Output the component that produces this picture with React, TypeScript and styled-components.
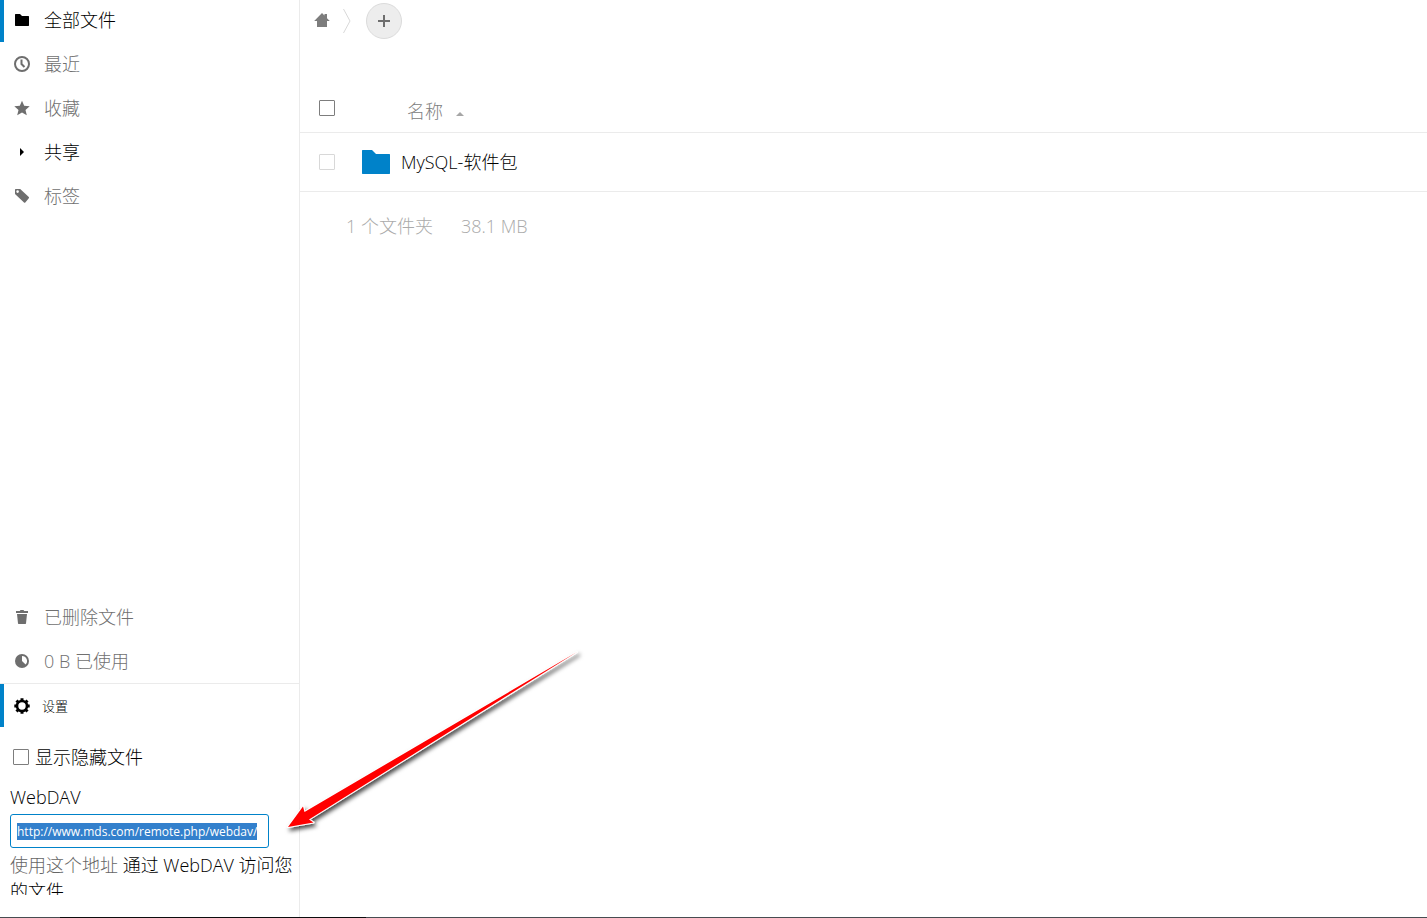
import React from "react";
import styled, { createGlobalStyle, css } from "styled-components";

const GlobalStyle = createGlobalStyle`
  *, *::before, *::after { box-sizing: border-box; }
  body {
    margin: 0;
    background: #fff;
    color: #000;
    font-family: "Open Sans", "Noto Sans CJK SC", sans-serif;
    font-size: 18px;
    font-weight: 300;
    line-height: 26px;
  }
  button, input { font: inherit; color: inherit; }
  a { color: inherit; text-decoration: none; }
`;

const Shell = styled.div`
  position: relative;
  display: grid;
  grid-template-columns: 300px 1fr;
  min-height: 100vh;
  overflow: hidden;
  padding-bottom: 1px;
  background: linear-gradient(90deg, #474c51 60px, #0c0c0e 60px 366px, #474c51 366px) bottom / 100% 1px no-repeat;
`;

const Sidebar = styled.aside`
  display: flex;
  flex-direction: column;
  justify-content: space-between;
  border-right: 1px solid #ebebeb;
  padding-bottom: 22px;
`;

const NavList = styled.ul`
  list-style: none;
  margin: 0;
  padding: 0;
`;

const MainNav = styled(NavList)`
  margin-top: -2px;
`;

const activeBar = css`
  box-shadow: inset 4px 0 #0082c9;
`;

const NavLink = styled.a<{ $active?: boolean; $strong?: boolean }>`
  display: flex;
  align-items: center;
  gap: 14px;
  height: 44px;
  padding-left: 14px;
  color: ${(p) => (p.$active || p.$strong ? "#000" : "#707070")};
  ${(p) => p.$active && activeBar}
  svg { color: ${(p) => (p.$active || p.$strong ? "#000" : "#6e6e6e")}; }
`;

const Icon = styled.svg`
  width: 16px;
  height: 16px;
  flex: none;
  display: block;
`;

const Settings = styled.section`
  border-top: 1px solid #ebebeb;
`;

const SettingsButton = styled.button`
  display: flex;
  align-items: center;
  gap: 12px;
  width: 100%;
  height: 43px;
  padding: 0 0 0 14px;
  border: 0;
  background: none;
  font-size: 13px;
  ${activeBar}
`;

const SettingsBody = styled.div`
  height: 168px;
  overflow: hidden;
  padding: 17px 4px 0 10px;
`;

const CheckLabel = styled.label`
  display: flex;
  align-items: center;
  gap: 6px;
  padding-left: 3px;
`;

const Checkbox = styled.input.attrs({ type: "checkbox" })<{ $faint?: boolean }>`
  appearance: none;
  display: block;
  width: 16px;
  height: 16px;
  margin: 0;
  flex: none;
  border: 1px solid ${(p) => (p.$faint ? "#d8d8d8" : "#7d7d7d")};
  border-radius: 1px;
  background: #fff;
`;

const FieldLabel = styled.label`
  display: block;
  margin-top: 14px;
`;

const AddressField = styled.input`
  display: block;
  width: 259px;
  height: 34px;
  margin: 4px 0;
  padding: 1px 6px 0;
  border: 1px solid #0082c9;
  border-radius: 3px;
  outline: none;
  font-size: 12px;
  font-weight: 400;
  &::selection { background: #3380cc; color: #fff; }
`;

const Hint = styled.p`
  margin: 0;
  a { color: #666; }
`;

const Main = styled.main`
  min-width: 0;
`;

const Toolbar = styled.nav`
  display: flex;
  align-items: center;
  height: 42px;
  padding-left: 14px;
  color: #7d7d7d;
`;

const Separator = styled.svg`
  width: 8px;
  height: 24px;
  margin: 0 15px 0 13px;
`;

const AddButton = styled.button`
  display: grid;
  place-items: center;
  width: 36px;
  height: 36px;
  padding: 0;
  border: 1px solid #dbdbdb;
  border-radius: 50%;
  background: #ededed;
  color: #6e6e6e;
`;

const FileTable = styled.table`
  width: 100%;
  margin-top: 42px;
  border-collapse: collapse;
  table-layout: fixed;
`;

const SelectCell = styled.td`
  width: 62px;
  padding: 1px 0 0 19px;
`;

const HeadRow = styled.tr`
  height: 48px;
  border-bottom: 1px solid #ebebeb;
`;

const FileRow = styled.tr`
  height: 59px;
  border-bottom: 1px solid #ebebeb;
`;

const NameHead = styled.th`
  padding: 6px 0 0 45px;
  text-align: left;
  font-weight: 300;
  color: #808080;
`;

const SortButton = styled.button`
  display: flex;
  align-items: center;
  gap: 13px;
  padding: 0;
  border: 0;
  background: none;
  svg { width: 8px; height: 4px; margin-top: 6px; }
`;

const NameCell = styled.td`
  padding: 0;
`;

const FileLink = styled.a`
  display: flex;
  align-items: center;
  gap: 11px;
  svg { width: 28px; height: 24px; }
`;

const Summary = styled.p`
  display: flex;
  gap: 28px;
  margin: 21px 0 0 46px;
  color: #aaa;
`;

const Arrow = styled.svg`
  position: absolute;
  left: 280px;
  bottom: 78px;
  width: 310px;
  height: 200px;
  pointer-events: none;
`;

const FolderIcon = () => (
  <Icon viewBox="0 0 16 16" fill="currentColor"><path d="M1.5 2H6l2 2h6.500l.5.5v9l-.5.5h-13l-.5-.5v-11z" /></Icon>
);
const ClockIcon = () => (
  <Icon viewBox="0 0 16 16" fill="none" stroke="currentColor" strokeWidth="2"><circle cx="8" cy="8" r="7" /><path d="M7.500 3.500V8l3 3" /></Icon>
);
const StarIcon = () => (
  <Icon viewBox="0 0 16 16" fill="currentColor"><path d="M8 .7l2.2 5.1 5.500.5-4.200 3.600 1.300 5.400L8 12.400l-4.800 2.900 1.300-5.400L.3 6.300l5.500-.5z" /></Icon>
);
const CaretIcon = () => (
  <Icon viewBox="0 0 16 16" fill="currentColor"><path d="M6 4l4 4-4 4z" /></Icon>
);
const TagIcon = () => (
  <Icon viewBox="0 0 16 16" fill="currentColor"><path fillRule="evenodd" d="M1.600 1h4.600l8.600 8c.4.4.4.9 0 1.300L11.300 14.500c-.4.4-.9.4-1.300 0L1 6V1.600zM3.600 2.300a1.300 1.300 0 1 0 0 2.600 1.300 1.300 0 0 0 0-2.600z" /></Icon>
);
const TrashIcon = () => (
  <Icon viewBox="0 0 16 16" fill="currentColor"><path d="M6.500 1h3l.7 1H14v2H2V2h3.800zM3 5h10l-1 9.500-.5.5h-7l-.5-.5z" /></Icon>
);
const QuotaIcon = () => (
  <Icon viewBox="0 0 16 16"><circle cx="8" cy="8" r="7" fill="currentColor" /><path d="M8 3a5 5 0 0 1 3.600 8.500L8 8z" fill="#fff" /></Icon>
);
const GearIcon = () => (
  <Icon viewBox="0 0 16 16">
    <circle cx="8" cy="8" r="5" fill="none" stroke="currentColor" strokeWidth="2.600" />
    <path d="M8 .3v2.500M8 13.200v2.500M.3 8h2.500M13.200 8h2.500M2.500 2.500l1.700 1.700M11.800 11.800l1.700 1.700M2.500 13.500l1.700-1.700M11.800 4.200l1.700-1.700" stroke="currentColor" strokeWidth="3" />
  </Icon>
);
const HomeIcon = () => (
  <Icon viewBox="0 0 16 16" fill="currentColor"><path d="M8 0L.2 8H3v6h10V8h2.800L13 5.200V1h-2.500v1.500z" /></Icon>
);
const PlusIcon = () => (
  <Icon viewBox="0 0 16 16" fill="currentColor"><path d="M7 2h2v5h5v2H9v5H7V9H2V7h5z" /></Icon>
);

const files = [{ name: "MySQL-软件包" }];

export default function App() {
  const address = React.useRef<HTMLInputElement>(null);
  React.useEffect(() => {
    address.current?.focus({ preventScroll: true });
    address.current?.select();
  }, []);

  return (
    <>
      <GlobalStyle />
      <Shell>
        <Sidebar>
          <MainNav>
            <li><NavLink href="#files" $active><FolderIcon />全部文件</NavLink></li>
            <li><NavLink href="#recent"><ClockIcon />最近</NavLink></li>
            <li><NavLink href="#favorites"><StarIcon />收藏</NavLink></li>
            <li><NavLink href="#shares" $strong><CaretIcon />共享</NavLink></li>
            <li><NavLink href="#tags"><TagIcon />标签</NavLink></li>
          </MainNav>
          <div>
            <NavList>
              <li><NavLink href="#trash"><TrashIcon />已删除文件</NavLink></li>
              <li><NavLink href="#quota"><QuotaIcon />0 B 已使用</NavLink></li>
            </NavList>
            <Settings>
              <SettingsButton type="button" aria-expanded="true"><GearIcon />设置</SettingsButton>
              <SettingsBody>
                <CheckLabel><Checkbox />显示隐藏文件</CheckLabel>
                <FieldLabel htmlFor="webdav">WebDAV</FieldLabel>
                <AddressField id="webdav" ref={address} type="text" readOnly defaultValue="http://www.mds.com/remote.php/webdav/" />
                <Hint><a href="#help">使用这个地址</a> 通过 WebDAV 访问您的文件</Hint>
              </SettingsBody>
            </Settings>
          </div>
        </Sidebar>
        <Main>
          <Toolbar>
            <a href="#home" aria-label="主页"><HomeIcon /></a>
            <Separator viewBox="0 0 8 24" fill="none" stroke="#d8d8d8"><path d="M.5 0l6.500 12L.5 24" /></Separator>
            <AddButton type="button" aria-label="新建"><PlusIcon /></AddButton>
          </Toolbar>
          <FileTable>
            <thead>
              <HeadRow>
                <SelectCell as="th"><Checkbox aria-label="全选" /></SelectCell>
                <NameHead>
                  <SortButton type="button">名称<svg viewBox="0 0 8 4" fill="#a6a6a6"><path d="M0 4l4-4 4 4z" /></svg></SortButton>
                </NameHead>
              </HeadRow>
            </thead>
            <tbody>
              {files.map((f) => (
                <FileRow key={f.name}>
                  <SelectCell><Checkbox $faint aria-label={f.name} /></SelectCell>
                  <NameCell>
                    <FileLink href="#folder">
                      <svg viewBox="0 0 28 24" fill="#0082c9"><path d="M.5 0H10l4 4h13.500l.5.5v19l-.5.5H.5l-.5-.5V.5z" /></svg>
                      {f.name}
                    </FileLink>
                  </NameCell>
                </FileRow>
              ))}
            </tbody>
          </FileTable>
          <Summary><span>1 个文件夹</span><span>38.1 MB</span></Summary>
        </Main>
        <Arrow viewBox="280 640 310 200" aria-hidden="true">
          <defs>
            <filter id="shadow" x="-10%" y="-10%" width="120%" height="120%">
              <feDropShadow dx="2" dy="3" stdDeviation="2" floodColor="#000" floodOpacity="0.7" />
            </filter>
          </defs>
          <path d="M288 827L303 806.500 304.500 812 577 652 309 819.500 313.500 822.500z" fill="#f00" stroke="#fff" strokeWidth="2" paintOrder="stroke" strokeLinejoin="round" filter="url(#shadow)" />
        </Arrow>
      </Shell>
    </>
  );
}
